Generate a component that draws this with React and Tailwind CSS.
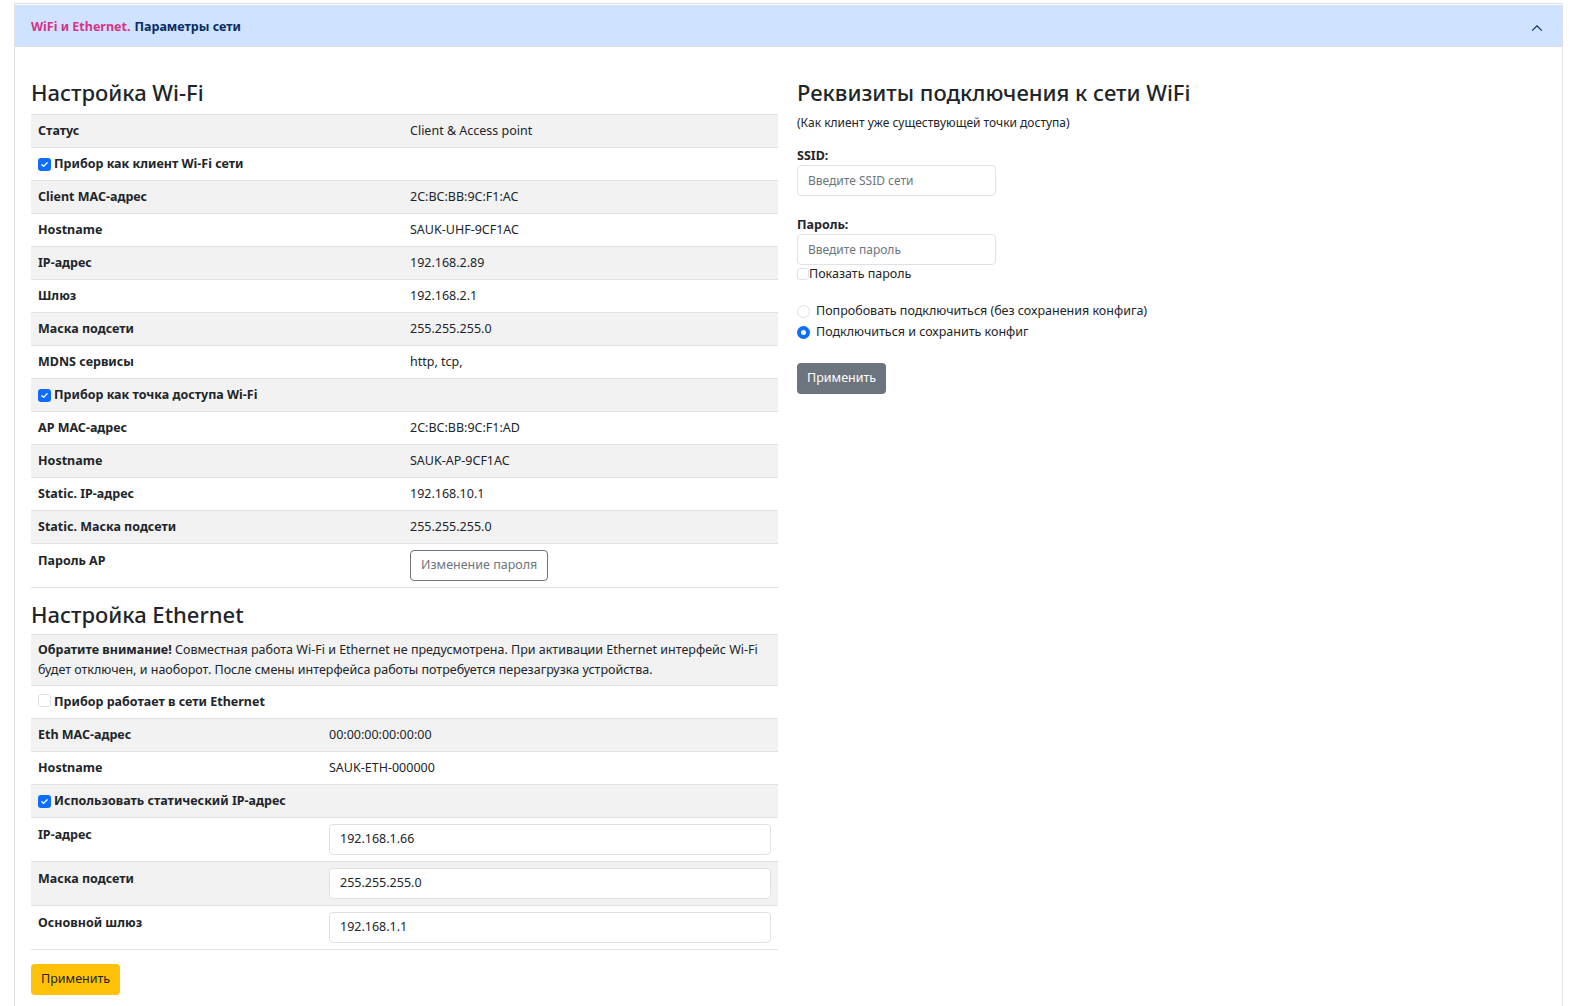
import React from "react";

const font = { fontFamily: '"Noto Sans", "Open Sans", sans-serif' };

const Check = ({ checked }) =>
    checked ? (
        <span className="inline-flex items-center justify-center w-[13px] h-[13px] rounded-[3px] bg-[#0d6efd] mr-[3px] align-[-1px]">
            <svg viewBox="0 0 12 12" className="w-[9px] h-[9px]">
                <path d="M2.5 6.2l2.3 2.3 4.7-4.9" fill="none" stroke="#fff" strokeWidth="1.8" strokeLinecap="round" strokeLinejoin="round" />
            </svg>
        </span>
    ) : (
        <span className="inline-block w-[13px] h-[13px] rounded-[3px] border border-[#dee2e6] bg-white mr-[3px] align-[-1px]" />
    );

const Row = ({ label, value, gray, tall, children }) => (
    <div className={`flex border-b border-[#dee2e6] ${gray ? "bg-[#f2f2f2]" : "bg-white"} ${tall ? "min-h-[44px]" : "h-[33px]"}`}>
        <div className={`w-[379px] shrink-0 px-[7px] font-bold text-[12.5px] text-[#212529] ${tall ? "pt-[8px]" : "flex items-center"}`}>{label}</div>
        <div className="flex-1 flex items-center text-[12.5px] text-[#212529]">{children || value}</div>
    </div>
);

const EthRow = ({ label, value, gray, tall, children }) => (
    <div className={`flex border-b border-[#dee2e6] ${gray ? "bg-[#f2f2f2]" : "bg-white"} ${tall ? "h-[44px]" : "h-[33px]"}`}>
        <div className={`w-[298px] shrink-0 px-[7px] font-bold text-[12.5px] text-[#212529] ${tall ? "pt-[8px]" : "flex items-center"}`}>{label}</div>
        <div className="flex-1 flex items-center pr-[7px] text-[12.5px] text-[#212529]">{children || value}</div>
    </div>
);

const CheckRow = ({ label, checked, gray }) => (
    <div className={`flex items-center h-[33px] border-b border-[#dee2e6] px-[7px] ${gray ? "bg-[#f2f2f2]" : "bg-white"}`}>
        <span className="font-bold text-[12.5px] text-[#212529]"><Check checked={checked} />{label}</span>
    </div>
);

const Field = ({ value }) => (
    <div className="w-full h-[31px] border border-[#dee2e6] rounded-[4px] bg-white px-[10px] flex items-center text-[12.5px] text-[#212529]">{value}</div>
);

export default function App() {
    return (
        <div className="min-h-screen bg-white pt-[3px] px-[14px]" style={font}>
            <div className="border-x border-t border-[#dee2e6] min-h-[1003px]">
                {/* Accordion header */}
                <div className="mt-[1px] h-[42px] bg-[#cfe2ff] flex items-center px-[16px] pt-[3px] shadow-[inset_0_-1px_0_#dee2e6]">
                    <span className="text-[12.5px] font-bold text-[#d63384]">WiFi и Ethernet.</span>
                    <span className="text-[12.5px] font-bold text-[#052c65] ml-[4px]">Параметры сети</span>
                    <svg viewBox="0 0 16 16" className="ml-auto w-[14px] h-[14px] mr-[2px]">
                        <path d="M2.5 11L8 5.5l5.5 5.5" fill="none" stroke="#052c65" strokeWidth="1.3" />
                    </svg>
                </div>

                <div className="flex gap-[19px] px-[16px] pt-[31px]">
                    {/* Left column */}
                    <div className="w-[747px] shrink-0">
                        <h2 className="text-[22px] font-medium leading-[28px] text-[#212529] mb-[8px]">Настройка Wi-Fi</h2>
                        <div className="border-t border-[#dee2e6]">
                            <Row label="Статус" value="Client & Access point" gray />
                            <CheckRow label="Прибор как клиент Wi-Fi сети" checked />
                            <Row label="Client MAC-адрес" value="2C:BC:BB:9C:F1:AC" gray />
                            <Row label="Hostname" value="SAUK-UHF-9CF1AC" />
                            <Row label="IP-адрес" value="192.168.2.89" gray />
                            <Row label="Шлюз" value="192.168.2.1" />
                            <Row label="Маска подсети" value="255.255.255.0" gray />
                            <Row label="MDNS сервисы" value="http, tcp," />
                            <CheckRow label="Прибор как точка доступа Wi-Fi" checked gray />
                            <Row label="AP MAC-адрес" value="2C:BC:BB:9C:F1:AD" />
                            <Row label="Hostname" value="SAUK-AP-9CF1AC" gray />
                            <Row label="Static. IP-адрес" value="192.168.10.1" />
                            <Row label="Static. Маска подсети" value="255.255.255.0" gray />
                            <Row label="Пароль AP" tall>
                                <button className="h-[31px] px-[10px] border border-[#6c757d] rounded-[4px] text-[12.5px] text-[#6c757d] bg-white">Изменение пароля</button>
                            </Row>
                        </div>

                        <h2 className="text-[22px] font-medium leading-[28px] text-[#212529] mt-[12px] mb-[6px]">Настройка Ethernet</h2>
                        <div className="border-t border-[#dee2e6]">
                            <div className="bg-[#f2f2f2] border-b border-[#dee2e6] pl-[7px] pr-[14px] py-[5px] text-[12.5px] leading-[20px] text-[#212529]">
                                <b>Обратите внимание!</b> Совместная работа Wi-Fi и Ethernet не предусмотрена. При активации Ethernet интерфейс Wi-Fi будет отключен, и наоборот. После смены интерфейса работы потребуется перезагрузка устройства.
                            </div>
                            <CheckRow label="Прибор работает в сети Ethernet" />
                            <EthRow label="Eth MAC-адрес" value="00:00:00:00:00:00" gray />
                            <EthRow label="Hostname" value="SAUK-ETH-000000" />
                            <CheckRow label="Использовать статический IP-адрес" checked gray />
                            <EthRow label="IP-адрес" tall><Field value="192.168.1.66" /></EthRow>
                            <EthRow label="Маска подсети" tall gray><Field value="255.255.255.0" /></EthRow>
                            <EthRow label="Основной шлюз" tall><Field value="192.168.1.1" /></EthRow>
                        </div>
                        <button className="mt-[14px] h-[31px] px-[10px] rounded-[4px] bg-[#ffc107] text-[12.5px] text-[#212529]">Применить</button>
                    </div>

                    {/* Right column */}
                    <div className="flex-1">
                        <h2 className="text-[22px] font-medium leading-[28px] text-[#212529]">Реквизиты подключения к сети WiFi</h2>
                        <p className="text-[12px] leading-[18px] text-[#212529] mt-[8px]">(Как клиент уже существующей точки доступа)</p>
                        <div className="mt-[15px] text-[12.5px] leading-[18px] font-bold text-[#212529]">SSID:</div>
                        <div className="w-[199px] h-[31px] border border-[#dee2e6] rounded-[4px] px-[10px] flex items-center text-[12px] text-[#6c757d]">Введите SSID сети</div>
                        <div className="mt-[20px] text-[12.5px] leading-[18px] font-bold text-[#212529]">Пароль:</div>
                        <div className="w-[199px] h-[31px] border border-[#dee2e6] rounded-[4px] px-[10px] flex items-center text-[12px] text-[#6c757d]">Введите пароль</div>
                        <div className="flex items-center text-[12.5px] leading-[18px] text-[#212529]">
                            <span className="inline-block w-[12px] h-[12px] rounded-[3px] border border-[#dee2e6]" />
                            Показать пароль
                        </div>
                        <div className="mt-[18px] flex items-center gap-[6px] text-[12.5px] text-[#212529] h-[21px]">
                            <span className="w-[13px] h-[13px] rounded-full border border-[#dee2e6] bg-white" />
                            Попробовать подключиться (без сохранения конфига)
                        </div>
                        <div className="flex items-center gap-[6px] text-[12.5px] text-[#212529] h-[21px]">
                            <span className="w-[13px] h-[13px] rounded-full border-[4px] border-[#0d6efd] bg-white" />
                            Подключиться и сохранить конфиг
                        </div>
                        <button className="mt-[20px] h-[31px] px-[10px] rounded-[4px] bg-[#6c757d] text-[12.5px] text-white">Применить</button>
                    </div>
                </div>
            </div>
        </div>
    );
}
